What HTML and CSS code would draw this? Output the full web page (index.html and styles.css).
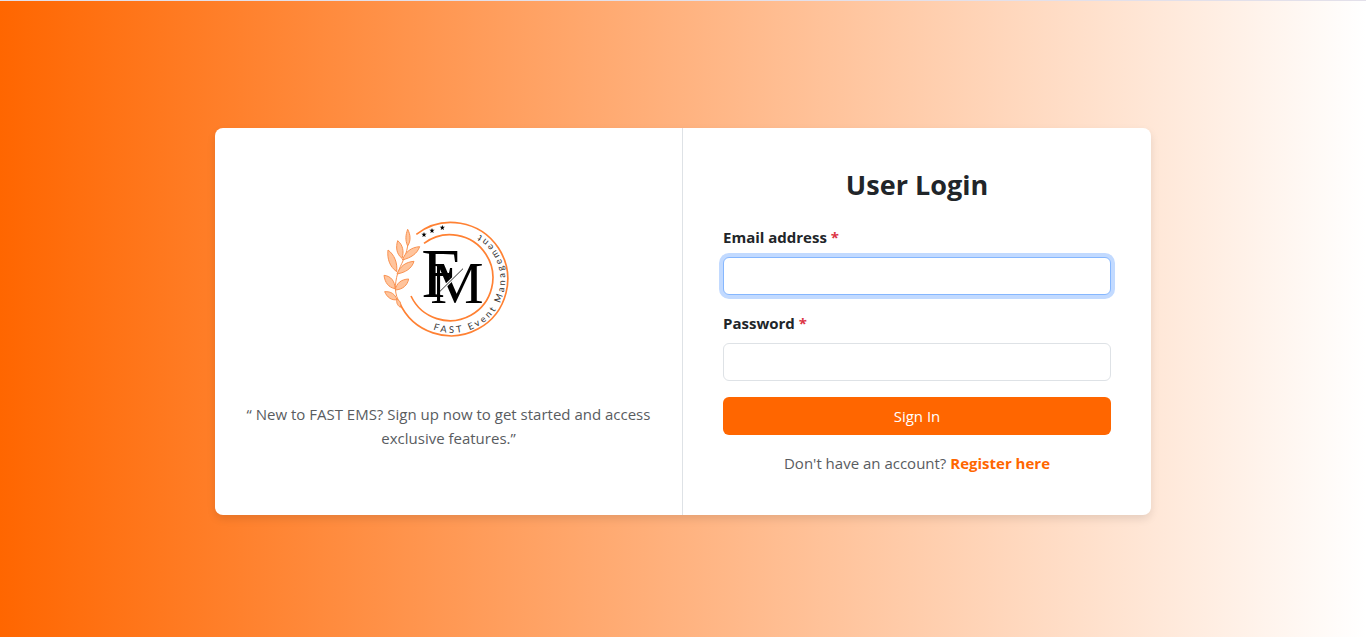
FILE: index.html
```html
<!DOCTYPE html>
<html lang="en">
<head>
    <meta charset="UTF-8">
    <meta name="viewport" content="width=device-width, initial-scale=1.0">
    <title>User Login</title>
    <link rel="stylesheet" href="styles.css">
</head>
<body>

<main class="login-card">
    <section class="intro">
        <svg class="logo" viewBox="-57 -51 555 555" role="img" aria-label="FAST Event Management">
            <defs>
                <path id="ring-text" d="M174 358 A159 159 0 0 0 295 64"/>
                <path id="star" d="M0 -8 L2 -3 L8 -3 L3 1 L5 7 L0 4 L-5 7 L-3 1 L-8 -3 L-2 -3 Z"/>
            </defs>

            <!-- Rings -->
            <path class="ring" d="M124 73 A170 170 0 1 1 73 277"/>
            <path class="ring" d="M147 100 A129 129 0 1 1 108 258"/>

            <!-- Stars -->
            <use href="#star" x="147" y="74"/>
            <use href="#star" x="171" y="62"/>
            <use href="#star" x="202" y="53"/>

            <!-- Branch -->
            <g class="branch">
                <path class="stem" d="M75 278 C58 255 58 225 68 190 C78 160 92 145 98 108"/>
                <path d="M98 108 C90 90 92 75 98 58 C107 75 108 92 98 108 Z"/>
                <path d="M82 150 C92 125 108 112 134 110 C126 132 108 143 82 150 Z"/>
                <path d="M81 145 C64 132 62 112 68 92 C83 104 88 124 81 145 Z"/>
                <path d="M65 185 C44 170 36 146 39 120 C58 134 68 158 65 185 Z"/>
                <path d="M66 192 C76 168 92 156 117 154 C110 176 92 187 66 192 Z"/>
                <path d="M60 236 C40 232 30 218 27 196 C48 198 60 214 60 236 Z"/>
                <path d="M61 240 C64 220 78 208 101 207 C97 226 84 238 61 240 Z"/>
                <path d="M66 269 C50 272 36 262 29 245 C48 244 60 252 66 269 Z"/>
                <path d="M66 267 C76 273 79 281 76 292 C67 286 63 277 66 267 Z"/>
            </g>

            <!-- Monogram -->
            <text class="monogram"><tspan class="letter-f" x="139" y="260">F</tspan><tspan class="letter-m" x="166" y="280">M</tspan></text>
            <path class="slash-gap" d="M210 229 L254 186"/>
            <path class="slash" d="M195 244 L264 176"/>

            <text class="ring-label"><textPath href="#ring-text">FAST Event Management</textPath></text>
        </svg>
        <p>“ New to FAST EMS? Sign up now to get started and access exclusive features.”</p>
    </section>

    <section class="login">
        <h1>User Login</h1>
        <form action="#" method="post">
            <label for="email">Email address <span class="required">*</span></label>
            <input type="email" name="email" id="email" required autofocus>

            <label for="password">Password <span class="required">*</span></label>
            <input type="password" name="password" id="password" required>

            <button type="submit">Sign In</button>
        </form>
        <p>Don't have an account? <a href="#">Register here</a></p>
    </section>
</main>

</body>
</html>
```
FILE: styles.css
```css
* {
    box-sizing: border-box;
}

body {
    margin: 0;
    min-height: 100vh;
    padding: 5px 12px 0;
    display: flex;
    justify-content: center;
    align-items: center;
    border-top: 1px solid #e3e0ea;
    background: linear-gradient(to right, #ff6600, #ffffff) no-repeat;
    font-family: "Segoe UI", "Open Sans", "Noto Sans", sans-serif;
    font-size: 15px;
    line-height: 24px;
    color: #212529;
}

.login-card {
    display: flex;
    width: 100%;
    max-width: 936px;
    background: white;
    border-radius: 8px;
    box-shadow: 0 4px 8px rgba(0, 0, 0, 0.1);
}

.intro, .login {
    width: 50%;
    text-align: center;
}

.intro {
    display: flex;
    flex-direction: column;
    align-items: center;
    justify-content: center;
    padding: 24px;
    border-right: 1px solid #dee2e6;
}

.login {
    padding: 40px;
}

p {
    margin: 0;
    color: #595c5f;
}

h1 {
    margin: 0 0 24px;
    font-size: 27px;
    font-weight: bold;
    line-height: 33px;
}

label {
    display: block;
    margin-bottom: 8px;
    font-weight: bold;
    text-align: left;
}

.required {
    color: #dc3545;
}

input {
    display: block;
    width: 100%;
    height: 38px;
    margin-bottom: 16px;
    padding: 6px 12px;
    border: 1px solid #dee2e6;
    border-radius: 6px;
    background: white;
    font: inherit;
}

input:focus {
    border-color: #86b7fe;
    outline: 0;
    box-shadow: 0 0 0 4px #c2daff;
}

button {
    display: block;
    width: 100%;
    height: 38px;
    margin-bottom: 16px;
    border: none;
    border-radius: 6px;
    background: #ff6600;
    color: white;
    font: inherit;
    cursor: pointer;
}

button:hover {
    background: #e65c00;
}

a {
    color: #ff6600;
    font-weight: bold;
    text-decoration: none;
}

/* Logo */
.logo {
    width: 185px;
    height: 185px;
    margin-bottom: 24px;
}

.ring {
    fill: none;
    stroke: #ff8133;
    stroke-width: 5;
}

.branch path {
    fill: #ffc49c;
    stroke: #f99150;
    stroke-width: 3;
}

.branch .stem {
    fill: none;
}

.monogram {
    font-family: "Liberation Serif", serif;
}

.letter-f {
    font-size: 208px;
}

.letter-m {
    font-size: 180px;
}

.slash {
    stroke: #333;
    stroke-width: 3;
}

.slash-gap {
    stroke: white;
    stroke-width: 9;
}

.ring-label {
    font-family: Lato, sans-serif;
    font-size: 28px;
    letter-spacing: 8px;
    fill: #333;
}
```
